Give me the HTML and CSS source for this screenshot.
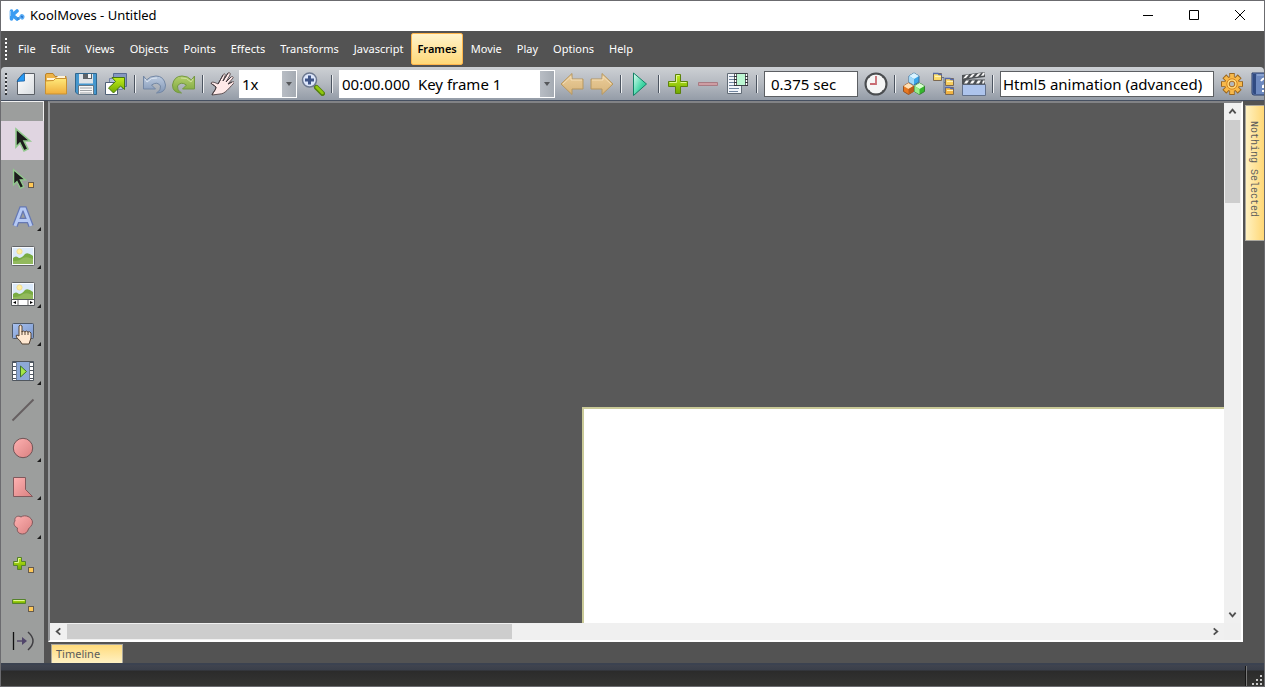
FILE: index.html
```html
<!DOCTYPE html>
<html lang="en">
<head>
<meta charset="utf-8">
<title>KoolMoves - Untitled</title>
<link rel="stylesheet" href="styles.css">
</head>
<body>
<svg class="defs" aria-hidden="true">
  <defs>
    <linearGradient id="gold" x2="0" y2="1"><stop stop-color="#ffe97a"/><stop offset="1" stop-color="#f0ae3c"/></linearGradient>
    <linearGradient id="lime" x2="0" y2="1"><stop stop-color="#c3ee1c"/><stop offset="1" stop-color="#6fa800"/></linearGradient>
    <linearGradient id="mint" x2="1" y2="1"><stop stop-color="#e0fff4"/><stop offset=".6" stop-color="#3fd5a4"/><stop offset="1" stop-color="#16b787"/></linearGradient>
    <linearGradient id="paper" x2="1" y2="1"><stop stop-color="#fff"/><stop offset="1" stop-color="#d8dce0"/></linearGradient>
    <linearGradient id="pink" x2="1" y2="1"><stop stop-color="#ffb2b2"/><stop offset="1" stop-color="#d98080"/></linearGradient>
    <linearGradient id="undo" x2="0" y2="1"><stop stop-color="#bccbe0"/><stop offset="1" stop-color="#8196b5"/></linearGradient>
    <linearGradient id="redo" x2="0" y2="1"><stop stop-color="#b4cf6d"/><stop offset="1" stop-color="#7ba63c"/></linearGradient>
    <linearGradient id="sand" x2="0" y2="1"><stop stop-color="#edcf9a"/><stop offset="1" stop-color="#d6b47c"/></linearGradient>
    <linearGradient id="sky" x2="1" y2="1"><stop stop-color="#a9c2f0"/><stop offset="1" stop-color="#7996cb"/></linearGradient>
    <symbol id="picture" viewBox="0 0 24 20">
      <rect x=".5" y=".5" width="23" height="19" rx="1" fill="#f8fbff" stroke="#626568"/>
      <rect x="2" y="2" width="20" height="16" fill="#dceafa"/>
      <circle cx="8.500" cy="5.500" r="2.600" fill="#fff0a0" stroke="#f4dc90"/>
      <path d="M2 12q3-3 6 0 3 0 6-4 3-2 8 2v8H2z" fill="#79ac43"/>
      <path d="M2 15c6 0 7-1 10-3 4-2 7 0 10 1v5H2z" fill="#92b95d"/>
    </symbol>
    <symbol id="cursor" viewBox="0 0 20 26">
      <path d="M3 2v18l4-4 4 8 4-2-4-8h6z" fill="#1c1c1c" stroke="#91c98d" stroke-width="1.600"/>
    </symbol>
    <symbol id="arrowleft" viewBox="0 0 24 24">
      <path d="M1 12 12 1.500V7h11v10H12v5.500z" fill="url(#sand)" stroke="#b69760" stroke-linejoin="round"/>
      <path d="M3 12 11 4.500V8h11" fill="none" stroke="#f3ddb7"/>
    </symbol>
  </defs>
</svg>
<div class="window">
  <header class="titlebar">
    <svg class="logo" viewBox="0 0 16 12"><path d="M2.500 2v8M8 2 3.500 6 8 10" fill="none" stroke="#3b9cf2" stroke-width="3.600" stroke-linecap="round"/><path d="M1.500 2v5" stroke="#8bc5f7"/><circle cx="9.500" cy="9.500" r="1.500" fill="#3487d8"/><path d="M10.500 9q1-4 3-3t1 3q-1 2-2.500 0z" fill="#2673cf" stroke="#5baef5" stroke-width="1.500"/></svg>
    <h1 class="title">KoolMoves - Untitled</h1>
    <div class="controls">
      <button class="control" aria-label="Minimize"><svg viewBox="0 0 12 12"><path d="M1 6.500h10"/></svg></button>
      <button class="control" aria-label="Maximize"><svg viewBox="0 0 12 12"><path d="M1.500 1.500h9v9h-9z"/></svg></button>
      <button class="control" aria-label="Close"><svg viewBox="0 0 12 12"><path d="m1 1 10 10M11 1 1 11"/></svg></button>
    </div>
  </header>
  <nav class="menubar" aria-label="Main menu">
    <span class="grip"></span>
    <button class="menu">File</button><button class="menu">Edit</button><button class="menu">Views</button><button class="menu">Objects</button><button class="menu">Points</button><button class="menu">Effects</button><button class="menu">Transforms</button><button class="menu">Javascript</button><button class="menu menu-active">Frames</button><button class="menu">Movie</button><button class="menu">Play</button><button class="menu">Options</button><button class="menu">Help</button>
  </nav>
  <div class="toolbar" role="toolbar" aria-label="Standard">
    <span class="grip"></span>
    <button class="tool" aria-label="New"><svg viewBox="0 0 24 24"><path d="M9 1.500h11.500v21h-17V8z" fill="url(#paper)" stroke="#5b6067"/><path d="M3 9.500Q7 9 10.500 9V1Q6 4 3 9.500z" fill="#2499f5" stroke="#1c5e9e" stroke-width=".8"/></svg></button>
    <button class="tool" aria-label="Open"><svg viewBox="0 0 24 24"><path d="M1.500 22V3q0-1.500 1.500-1.500h6l2 3h11v4" fill="#eeb449" stroke="#b98127"/><path d="M3 6h9l2-2h7v4H3z" fill="#fff4d8"/><path d="M1.500 22V9l8-.5 2-2h11V22z" fill="url(#gold)" stroke="#c99132"/></svg></button>
    <button class="tool" aria-label="Save"><svg viewBox="0 0 24 24"><path d="M1.500 1.500h21v21H4l-2.500-2.500z" fill="#4597ce" stroke="#31678e"/><path d="M5 2h14v9.500H5z" fill="#dfe4e8"/><path d="M9 2h9v5H9z" fill="#5e6469"/><path d="M14 2h3v4h-3z" fill="#f3f5f6"/><path d="M4.500 13.500h15v9h-15z" fill="#f7f7f7" stroke="#667785"/><path d="M6 16h12M6 18.500h12M6 21h12" stroke="#9ea2a6"/></svg></button>
    <button class="tool" aria-label="Import"><svg viewBox="0 0 24 24"><path d="M9.500 1.500h13v13h-13z" fill="#8597c0" stroke="#596b92"/><path d="M5.500 6.500h13v11h-13z" fill="#b3c0dd" stroke="#7081a5"/><path d="M1.500 10.500h12v12h-12z" fill="#fff" stroke="#4f6077"/><path d="M8 5.500h12.500v12l-4-3.500-7 7-5-5 7-6.500z" fill="url(#lime)" stroke="#46770d"/></svg></button>
    <span class="separator"></span>
    <button class="tool" aria-label="Undo"><svg viewBox="0 0 24 24"><path d="M1.500 4v13h12l-4-4q6-4 9 1 1 4-4 7 9 0 9-8Q22 4 14 4 8 4 4.500 8z" fill="url(#undo)" stroke="#7387a4"/><path d="m3 7 2 3q4-5 10-4" fill="none" stroke="#dce5f0"/></svg></button>
    <button class="tool" aria-label="Redo"><svg viewBox="0 0 24 24"><path d="M22.500 4v13h-12l4-4q-6-4-9 1-1 4 4 7-9 0-9-8Q2 4 10 4q6 0 9.500 4z" fill="url(#redo)" stroke="#749843"/><path d="m21 7-2 3q-4-5-10-4" fill="none" stroke="#d0e19f"/></svg></button>
    <span class="separator"></span>
    <button class="tool" aria-label="Pan"><svg viewBox="0 0 24 24"><path d="M2 23c1-3 4-5 4-8-2-2-5-3-5-4 1-2 5 0 7 1l5-9c1-2 3-1 2 1l-2 5 5-8c1-1 3 0 2 2l-4 7 5-5c1-1 3 0 2 1l-5 6 4-2c2-1 3 0 1 2-4 4-8 10-13 10z" fill="#ffe9e8" stroke="#5f5254"/><path d="M2 23c1-3 4-5 4-8-2-2-5-3-5-4m7 1 5-9m0 6 5-8m-2 9 5-5m-3 7 4-2" fill="none" stroke="#443c40"/></svg></button>
    <div class="combo combo-zoom"><select aria-label="Zoom"><option>1x</option></select><svg class="combo-arrow" viewBox="0 0 6 4"><path d="M0 0h6L3 4z" fill="#56585b"/></svg></div>
    <button class="tool" aria-label="Zoom in"><svg viewBox="0 0 24 24"><path d="m13 13 3 3" stroke="#6c7279" stroke-width="3"/><path d="m15.500 15.500 6 6" stroke="#54800e" stroke-width="5" stroke-linecap="round"/><path d="m15.500 15 6 6" stroke="#91c80c" stroke-width="2.500" stroke-linecap="round"/><circle cx="8.500" cy="8" r="7" fill="#dce6fb" stroke="#6d7990" stroke-width="1.500"/><path d="M8.500 3.500v9M4 8h9" stroke="#3f5588" stroke-width="3"/></svg></button>
    <span class="separator"></span>
    <div class="combo combo-frame"><select aria-label="Key frame"><option>00:00.000&nbsp; Key frame 1</option></select><svg class="combo-arrow" viewBox="0 0 6 4"><path d="M0 0h6L3 4z" fill="#56585b"/></svg></div>
    <button class="tool" aria-label="Previous frame"><svg><use href="#arrowleft"/></svg></button>
    <button class="tool" aria-label="Next frame"><svg class="flip"><use href="#arrowleft"/></svg></button>
    <span class="separator"></span>
    <button class="tool" aria-label="Play"><svg viewBox="0 0 24 24"><path d="M5.500 1v22.500L18.500 12z" fill="url(#mint)" stroke="#138266" stroke-linejoin="round"/></svg></button>
    <span class="separator"></span>
    <button class="tool" aria-label="Add frame"><svg viewBox="0 0 24 24"><path d="M9.500 2.500h5v7h7v5h-7v7h-5v-7h-7v-5h7z" fill="url(#lime)" stroke="#5c820c"/><path d="M10.500 10.500v-7h3M3.500 10.500h7M14.500 10.500h6" fill="none" stroke="#e0f790"/></svg></button>
    <button class="tool" aria-label="Remove frame"><svg viewBox="0 0 24 24"><path d="M2.500 10.500h19v3h-19z" fill="#ce9da3" stroke="#a87b83"/></svg></button>
    <button class="tool" aria-label="Frame properties"><svg viewBox="0 0 24 24"><path d="M1.500 1.500h14v20h-14z" fill="#f2f5fa" stroke="#626c77"/><path d="M3 4.500h10M3 7.500h10M3 10.500h10M3 13.500h10M3 16.500h10M3 19.500h9" stroke="#70849e"/><path d="M8.500 1.500h13v12h-13z" fill="#bcf7d2" stroke="#3c4047"/><path d="M9.500 2v12M20.500 2v12" stroke="#303238" stroke-width="3"/><path d="M9.500 2v12M20.500 2v12" stroke="#fff" stroke-width="1.500" stroke-dasharray="2 1"/></svg></button>
    <span class="separator"></span>
    <input class="field field-time" aria-label="Frame duration" value="0.375 sec">
    <button class="tool" aria-label="Timing"><svg viewBox="0 0 24 24"><circle cx="12" cy="12" r="10.500" fill="#f5f6f6" stroke="#4a4d50" stroke-width="2"/><path d="M12 4v8H6" fill="none" stroke="#c96c73" stroke-width="1.800"/><path d="M12 2v1M12 21v1M2 12h1M21 12h1M5 5l1 1M18 18l1 1M19 5l-1 1M5 19l1-1" stroke="#777"/></svg></button>
    <span class="separator"></span>
    <button class="tool" aria-label="Library"><svg viewBox="0 0 24 24"><path d="m12 1 5 3v6l-5 3-5-3V4z" fill="#3ba6e8" stroke="#366f9c"/><path d="m12 1 5 3-5 3-5-3z" fill="#d9f3ff"/><path d="M7 4v6l5 3V7z" fill="#a3d9f8"/><path d="m6.500 11 5 3v5.500l-5 3-5-3V14z" fill="#e87820" stroke="#955425"/><path d="m6.500 11 5 3-5 3-5-3z" fill="#ffe0b5"/><path d="m6.500 17 5-3v5.500l-5 3z" fill="#bd5c18"/><path d="m17.500 11 5 3v5.500l-5 3-5-3V14z" fill="#35b72d" stroke="#367d32"/><path d="m17.500 11 5 3-5 3-5-3z" fill="#d8ffd0"/><path d="m12.500 14 5 3v5.500l-5-3z" fill="#9aec8c"/></svg></button>
    <button class="tool" aria-label="Hierarchy"><svg viewBox="0 0 24 24"><path d="M9 5.500h3v15h3M12 10.500h4" fill="none" stroke="#60738e"/><g fill="url(#gold)" stroke="#7c6951"><path d="M1.500 1.500h8v7h-8zM13.500 6.500h8v7h-8zM13.500 15.500h8v7h-8z"/></g><path d="M1 1.500h5l1 1h3M13 6.500h5l1 1h3M13 15.500h5l1 1h3" fill="none" stroke="#566aaa" stroke-width="1.500"/><path d="M3 4.500h6M15 9.500h6M15 18.500h6" stroke="#fff3b8"/></svg></button>
    <button class="tool" aria-label="Movie clip"><svg viewBox="0 0 24 24"><path d="M.5 12.500h23v11H.5z" fill="#adc4ec" stroke="#62718b"/><path d="M0 3 23 0v5L0 8zM0 7.500h23v5H0z" fill="#4d5155"/><path d="m4 3 3-.4-3 3.500-3 .4zM10 2.200l3-.4-3 3.500-3 .4zM16 1.400l3-.4-3 3.500-3 .4zM21 .8l2-.3-1 3-3 .5zM4 8.500h3l-2 3H2zM10 8.500h3l-2 3H8zM16 8.500h3l-2 3h-3zM21 8.500h2l-1 3h-2z" fill="#f8f8f8"/></svg></button>
    <span class="separator"></span>
    <input class="field field-type" aria-label="Movie type" value="Html5 animation (advanced)">
    <button class="tool" aria-label="Settings"><svg viewBox="0 0 24 24"><g stroke="#9c671d" stroke-width="5.500"><path d="M12 1v22M1 12h22M4.300 4.300l15.400 15.400M19.700 4.300 4.300 19.700"/></g><g stroke="#f7b94b" stroke-width="3.800"><path d="M12 2v20M2 12h20M5 5l14 14M19 5 5 19"/></g><circle cx="12" cy="12" r="7" fill="#f9b847"/><circle cx="12" cy="12" r="5.200" fill="#ffda7a" stroke="#d58420"/><circle cx="12" cy="12" r="2.800" fill="#b2b8be" stroke="#ad6b1d"/></svg></button>
    <button class="tool" aria-label="Help book"><svg viewBox="0 0 24 24"><path d="M2 1h21v22H4q-2 0-2-2z" fill="#6d89bf" stroke="#263b69"/><path d="M3 2h3v20H4q-1 0-1-2z" fill="#314b82"/><path d="M7 3h15" stroke="#a4b9df"/><path d="M11 9q4-5 6 0 0 3-4 5v2M13 18v2" stroke="#fff" stroke-width="2" fill="none"/></svg></button>
  </div>
  <main class="workspace">
    <aside class="palette" aria-label="Drawing tools">
      <div class="palette-head"></div>
      <button class="draw draw-selected" aria-label="Select"><svg class="pointer-big"><use href="#cursor"/></svg></button>
      <button class="draw node" aria-label="Select point"><svg class="pointer-small"><use href="#cursor"/></svg></button>
      <button class="draw more" aria-label="Text"><svg viewBox="0 0 24 24"><path d="M4 21 10.500 4h3L20 21M7 15.500h10" fill="none" stroke="#6679b4" stroke-width="5.500"/><path d="M4 21 10.500 4h3L20 21M7 15.500h10" fill="none" stroke="#b5c9f4" stroke-width="3"/></svg></button>
      <button class="draw more" aria-label="Image"><svg><use href="#picture"/></svg></button>
      <button class="draw more" aria-label="Scrolling image"><svg viewBox="0 0 24 24"><use href="#picture" y="0" width="24" height="20"/><path d="M.5 17.500h23v6H.5z" fill="#fff" stroke="#54585b"/><path d="M7 18v5M17 18v5" stroke="#666"/><path d="m5 19-3 1.500L5 22zM19 19l3 1.500-3 1.500z"/></svg></button>
      <button class="draw more" aria-label="Button"><svg viewBox="0 0 24 24"><rect x="1.500" y="2.500" width="21" height="15" rx="1" fill="url(#sky)" stroke="#4e5968"/><path d="M8 15V5q1-2 3 0v6q1-2 3 0 1-2 3 0 2-1 3 1v5q-1 3-2 6h-7q-2-4-5-6-2-3 0-3z" fill="#ffe8d1" stroke="#554435"/><path d="M11 10v4M14 11v3M17 11v3" stroke="#554435"/></svg></button>
      <button class="draw more" aria-label="Movie clip"><svg viewBox="0 0 24 24"><path d="M1.500 2.500h21v19h-21z" fill="#8da9d7" stroke="#4f565e"/><path d="M3.500 3v18M20.500 3v18" stroke="#4f565e" stroke-width="4"/><path d="M3.500 4v17M20.500 4v17" stroke="#fff" stroke-width="3" stroke-dasharray="3 1"/><path d="M9.500 7v11l6-5.500z" fill="#a4e747" stroke="#3e742e"/></svg></button>
      <button class="draw" aria-label="Line"><svg viewBox="0 0 24 24"><path d="M1.500 22.500 22.500 1.500" stroke="#665f61" stroke-width="2"/></svg></button>
      <button class="draw more" aria-label="Ellipse"><svg viewBox="0 0 24 24"><circle cx="12" cy="12" r="9.700" fill="url(#pink)" stroke="#6f5456"/></svg></button>
      <button class="draw more" aria-label="Polygon"><svg viewBox="0 0 24 24"><path d="M2.500 2.500h12v12l7 7h-19z" fill="url(#pink)" stroke="#80595c"/></svg></button>
      <button class="draw more" aria-label="Freehand"><svg viewBox="0 0 24 24"><path d="M10 4c4-3 11 0 11.500 5 0 4-3 5-4 7-1 3-3 5-6 5-4 0-6-3-5-6-4-2-4-5-2.500-7-1-4 3-6 6-4z" fill="url(#pink)" stroke="#80595c"/></svg></button>
      <button class="draw node" aria-label="Add point"><svg viewBox="0 0 24 24"><path d="M6.500 5.500h4v4h4v4h-4v4h-4v-4h-4v-4h4z" fill="url(#lime)" stroke="#54812b"/><path d="M7.500 10.500v-4h2M3.500 10.500h4" fill="none" stroke="#dff993"/></svg></button>
      <button class="draw node" aria-label="Delete point"><svg viewBox="0 0 24 24"><path d="M1.500 9.500h13v4h-13z" fill="url(#lime)" stroke="#54812b"/><path d="M2.500 10.500h11" stroke="#dff993"/></svg></button>
      <button class="draw" aria-label="Morph"><svg viewBox="0 0 24 24"><path d="M2.500 3v18" stroke="#111" stroke-width="1.300"/><path d="M6 12h7" stroke="#5d536f" stroke-width="1.700"/><path d="m11 8 5 4-5 4z" fill="#51466b"/><path d="M17 3q10 9 0 18" fill="none" stroke="#403f43" stroke-width="1.500"/></svg></button>
    </aside>
    <section class="document">
      <div class="canvas-frame">
        <div class="canvas"><div class="stage"></div></div>
        <div class="scroll scroll-v"><svg class="chev" viewBox="0 0 10 10"><path d="m1.500 7 3.500-4 3.500 4"/></svg><div class="track"><div class="thumb"></div></div><svg class="chev" viewBox="0 0 10 10"><path d="m1.500 3 3.500 4 3.500-4"/></svg></div>
        <div class="scroll scroll-h"><svg class="chev" viewBox="0 0 10 10"><path d="M7 1.500 3 5l4 3.500"/></svg><div class="track"><div class="thumb"></div></div><svg class="chev" viewBox="0 0 10 10"><path d="m3 1.500 4 3.500-4 3.500"/></svg></div>
      </div>
      <button class="timeline-tab">Timeline</button>
    </section>
    <aside class="dock"><button class="side-tab">Nothing Selected</button></aside>
  </main>
  <footer class="statusbar"><span class="status-divider"></span><svg class="resize" viewBox="0 0 12 12"><path d="M8 1h2v2H8zM4 5h2v2H4zM8 5h2v2H8zM0 9h2v2H0zM4 9h2v2H4zM8 9h2v2H8z" fill="#c9c9c9"/></svg></footer>
</div>
</body>
</html>
```
FILE: styles.css
```css
*, *::after { box-sizing: border-box; }
body { margin: 0; font-family: "Noto Sans", "Open Sans", sans-serif; background: #535353; }
button { border: 0; padding: 0; background: none; font: inherit; color: inherit; }
svg { display: block; }
.defs { position: absolute; width: 0; height: 0; }
.window { display: flex; flex-direction: column; height: 100vh; border: 1px solid #6b6b6f; overflow: hidden; background: #535353; }

.titlebar { display: flex; align-items: center; flex: none; height: 30px; padding: 0 1px 2px 8px; background: #fff; }
.logo { width: 16px; height: 12px; }
.title { flex: 1; margin: 0 0 0 5px; font-size: 13px; font-weight: 400; color: #000; }
.controls { display: flex; }
.control { display: grid; place-items: center; width: 46px; height: 28px; }
.control svg { width: 12px; height: 12px; fill: none; stroke: #000; }

.menubar { display: flex; align-items: center; gap: 1px; flex: none; height: 36px; padding-left: 4px; font-size: 11px; color: #fff; }
.grip { width: 2px; height: 22px; margin-right: 4px; flex: none; background: repeating-linear-gradient(#fff 0 2px, transparent 2px 4px); }
.menubar .grip { margin-right: 3px; }
.menu { height: 32px; padding: 0 7px 2px; border: 1px solid transparent; border-width: 1px 0; }
.menu-active { padding: 0 5px 2px; border: 1px solid #ffb64c; border-radius: 2px; background: linear-gradient(#fff3cb, #ffd878); color: #000; font-weight: 600; }

.toolbar { display: flex; align-items: center; flex: none; height: 34px; padding: 1px 0 0 4px; overflow: hidden; border-bottom: 1px solid #465061; border-radius: 4px 4px 0 0; background: linear-gradient(#cdd0d4, #b4b9c0 50%, #949ca7); }
.toolbar .grip { background: repeating-linear-gradient(#33363a 0 2px, #e5e6e8 2px 4px); }
.tool { display: grid; place-items: center; width: 30px; height: 30px; flex: none; }
.tool svg { width: 24px; height: 24px; }
.tool .flip { transform: scaleX(-1); }
.separator { width: 2px; height: 18px; margin: 0 3px; flex: none; border-left: 1px solid #4b5460; background: #eceef0; }
.combo { position: relative; flex: none; height: 28px; }
.combo-zoom { width: 58px; margin: 0 1px 0 2px; }
.combo-frame { width: 216px; margin: 0 2px 0 3px; }
.combo select { width: 100%; height: 100%; padding: 0 2px; border: 1px solid #fff; border-radius: 0; appearance: none; background: linear-gradient(90deg, #b8bdc4, #a5abb3) right / 14px 100% no-repeat #fff; font: 15px "Noto Sans", sans-serif; color: #000; }
.combo-arrow { position: absolute; right: 5px; top: 12px; width: 6px; height: 4px; pointer-events: none; }
.field { flex: none; height: 26px; border: 1px solid #5c5f63; border-radius: 0; background: #fff; font: 15px "Noto Sans", sans-serif; color: #000; }
.field-time { width: 94px; margin: 0 3px; padding: 0 6px; }
.field-type { width: 214px; margin: 0 3px; padding: 0 2px; }

.workspace { display: flex; flex: 1; min-height: 0; }
.palette { display: flex; flex-direction: column; flex: none; width: 43px; padding-bottom: 3px; background: #9c9e9d; }
.palette-head { flex: none; height: 20px; border: 1px solid #f0f0f0; border-width: 1px 1px 0 0; }
.draw { position: relative; display: grid; place-items: center; flex: 1; min-height: 0; }
.draw svg { width: 24px; height: 24px; }
.draw-selected { background: #e0d5e1; }
.draw .pointer-big { width: 20px; height: 26px; }
.draw .pointer-small { width: 17px; height: 22px; margin-right: 6px; }
.more::after { content: ""; position: absolute; right: 3px; bottom: 6px; border-style: solid; border-width: 0 0 4px 4px; border-color: transparent transparent #1b1b1b; }
.node::after { content: ""; position: absolute; right: 10px; bottom: 10px; width: 6px; height: 6px; border: 1px solid #665b4d; background: #ffc857; }

.document { display: flex; flex-direction: column; align-items: flex-start; flex: 1; min-width: 0; padding-left: 4px; }
.canvas-frame { display: grid; grid-template: minmax(0, 1fr) 17px / minmax(0, 1fr) 17px; flex: 1; min-height: 0; width: 100%; border: 2px solid #fff; border-top-color: #818285; border-left-color: #96989a; background: #efefef; }
.canvas { display: flex; justify-content: flex-end; align-items: flex-end; background: #595959; overflow: hidden; }
.stage { width: 54.7%; height: 41.5%; border: 2px solid #caca98; border-width: 2px 0 0 2px; background: #fff; }
.scroll { display: flex; align-items: center; justify-content: space-between; background: #f0f0f0; }
.scroll-v { flex-direction: column; padding: 0 1px; }
.scroll-h { padding: 1px 0; }
.chev { flex: none; width: 17px; height: 17px; padding: 4px 3px; fill: none; stroke: #505050; stroke-width: 2; }
.track { flex: 1; align-self: stretch; }
.thumb { background: #cdcdcd; }
.scroll-v .thumb { height: 17%; }
.scroll-h .thumb { width: 39%; height: 100%; }
.timeline-tab { width: 72px; height: 19px; margin: 2px 0 0 3px; padding: 0 4px; border: 1px solid #aaa79e; border-bottom: 0; background: linear-gradient(#ffdb7c, #fff1c3); font-size: 11px; line-height: 18px; color: #5b5b5b; text-align: left; }
.dock { flex: none; width: 21px; padding: 4px 0 0 2px; }
.side-tab { display: block; width: 19px; height: 136px; padding: 15px 4px 0 0; border: 1px solid #aaa79e; border-right: 0; background: linear-gradient(90deg, #fff1c0, #ffd775); writing-mode: vertical-rl; font: 10px/14px "Liberation Mono", monospace; color: #5b5b5b; text-align: left; }

.statusbar { display: flex; justify-content: flex-end; align-items: flex-end; flex: none; height: 23px; background: linear-gradient(#3b4250 0 2px, #40444f 2px, #3a3f4a 7px, #2b2b2b 8px, #353533); }
.status-divider { width: 2px; height: 20px; margin-right: 5px; background: linear-gradient(90deg, #151515 50%, #777 50%); }
.resize { width: 12px; height: 12px; }
```
